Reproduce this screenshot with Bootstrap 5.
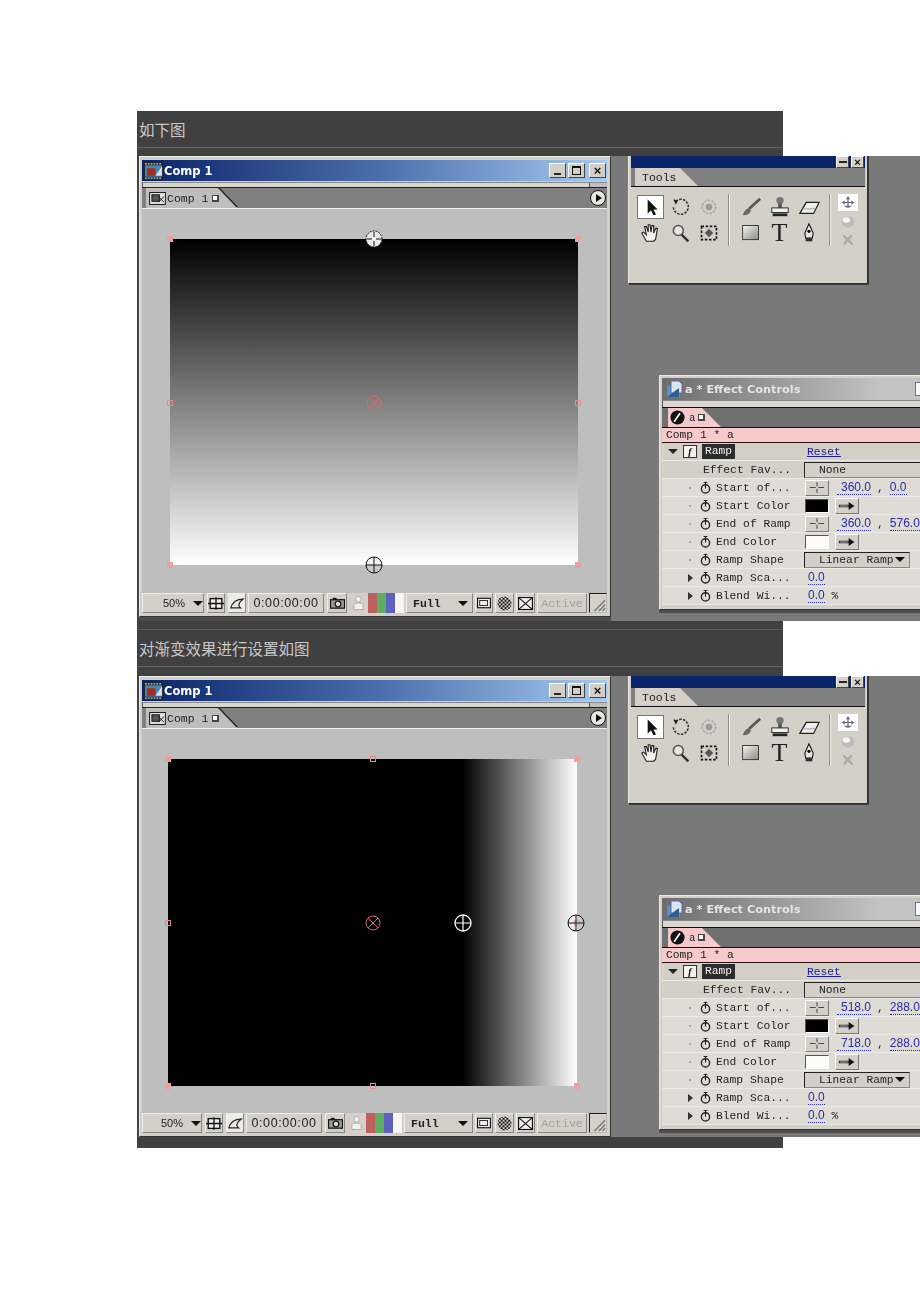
<!DOCTYPE html>
<html lang="zh">
<head>
  <meta charset="UTF-8" />
  <meta name="viewport" content="width=device-width, initial-scale=1.0"/>
  <title>如下图</title>
  <link rel="stylesheet" href="https://cdn.jsdelivr.net/npm/bootstrap@5.3.0/dist/css/bootstrap.min.css" />
  <style>
  body { background: #fff; margin: 0; overflow-x: hidden; }
  #doc { margin-left: 137px; padding-top: 111px; width: 783px; height: 1191px; overflow: hidden; }
  .band { width: 646px; background: #404040; color: #c9c9c9; font: 15.5px "Noto Sans CJK SC", sans-serif; }
  .band-text { height: 37px; padding-left: 2px; line-height: 36px; border-bottom: 1px solid #666; }
  .band-top { height: 8px; border-bottom: 1px solid #5c5c5c; box-sizing: content-box; }
  .band-gap { height: 8px; }
  .band-end { height: 11px; }
  .desk { width: 783px; height: 465px; background: #797979; overflow: hidden; filter: blur(.45px); }
  .win { background: #d4d0c8; border: 1px solid; border-color: #eceae4 #333 #333 #eceae4; box-sizing: border-box; }

  /* comp window */
  .comp { left: 2px; top: 0; width: 472px; height: 461px; padding: 3px 3px 3px 2px; box-shadow: -2px 0 0 #444, 0 4px 0 #4c4c4c, -2px 4px 0 #444; }
  .comp-title { height: 21px; margin-bottom: 1px; padding-left: 2px; background: linear-gradient(90deg, #0a246a, #4a6cab 50%, #a6caf0); color: #fff; font: bold 11.5px "DejaVu Sans", sans-serif; }
  .capbtn { width: 17px; height: 15px; background: #d4d0c8; border: 1px solid; border-color: #fff #444 #444 #fff; margin-right: 2px; display: block; }
  .strip { height: 6px; background: #d9d6cf; border-top: 1px solid #888; border-left: 1px solid #555; border-bottom: 1px solid #222; }
  .strip-end { width: 18px; margin-left: auto; height: 100%; background: #bebebe; border-left: 1px solid #555; }
  .tabrow { height: 21px; background: #808080; border-bottom: 1px solid #f0f0f0; padding-left: 4px; }
  .tab-wrap { filter: drop-shadow(1px -1px 0 #222); }
  .tab-in { height: 20px; background: #bebebe; color: #222; font: 11.5px "Liberation Mono", monospace; clip-path: polygon(0 0, calc(100% - 19px) 0, 100% 100%, 0 100%); }
  .tab-dot { width: 7px; height: 7px; background: #fff; border: 1px solid #444; border-width: 1px 2px 2px 1px; margin-left: 4px; }
  .playbtn { margin-left: auto; margin-right: 1px; }
  .viewer { height: 384px; background: #bebebe; }
  .pic { position: absolute; }
  .hnd { position: absolute; width: 6px; height: 6px; background: #eb9f9f; transform: translate(-50%, -50%); }
  .hnd-o { background: none; border: 1px solid #e68a8a; }
  .ctrl { position: absolute; width: 18px; height: 18px; transform: translate(-50%, -50%); }

  .stat { height: 20px; font: 11.5px "Liberation Mono", monospace; color: #222; }
  .stat-i { height: 20px; flex: none; background: #d4d0c8; border: 1px solid; border-color: #eee #888 #888 #eee; }
  .stat-f { border-color: transparent; background: none; }
  .stat-w { background: #ecebe6; }
  .stat-s { font: 11px "Liberation Sans", sans-serif; }
  .stat-t { font: 12.5px "Liberation Sans", sans-serif; letter-spacing: .6px; }
  .drop-tri { width: 0; height: 0; border: 5px solid transparent; border-top-color: #111; border-bottom-width: 0; }
  .bar-c { width: 9px; height: 100%; }
  .off-t { color: #a5a49c; }
  .grip { border-color: #222 #bbb #bbb #222; background: #d4d0c8; }

  /* tools */
  .tools { left: 491px; top: -1px; width: 240px; height: 129px; padding: 0 2px 0 2px; box-shadow: 1px 1px 0 #3a3a3a; border-top: 0; }
  .tools-title { height: 13px; background: #0a246a; padding-right: 1px; }
  .mini { width: 13px; height: 12px; background: #d4d0c8; border: 1px solid; border-color: #fff #444 #444 #fff; margin-left: 2px; display: block; }
  .tools-tabs { height: 19px; background: #808080; border-bottom: 1px solid #111; padding-left: 4px; }
  .tools-tab { height: 18px; padding: 0 0 0 7px; width: 63px; background: #d4d0c8; color: #222; font: 11.5px "Liberation Mono", monospace; clip-path: polygon(0 0, 45px 0, 100% 100%, 0 100%); }
  .tools-body { padding: 7px 0 0 5px; }
  .tgrid { display: grid; grid-template-columns: repeat(3, 29px); grid-auto-rows: 26px; justify-items: center; align-items: center; }
  .tsep { width: 1px; height: 52px; background: #8e8c85; border-right: 1px solid #f2f0ea; box-sizing: content-box; }
  .tsep-a { margin: 0 6px 0 5px; }
  .tsep-b { margin: 0 7px 0 6px; }
  .tile { width: 27px; height: 24px; background: #fff; border: 1px solid #777; }
  .tile-f { width: 20px; height: 17px; background: #fff; }
  .tside { width: 20px; }

  /* effect controls */
  .fx { left: 522px; top: 219px; width: 300px; height: 235px; padding: 2px 2px 0 2px; box-shadow: 0 3px 0 #4e4e4e; }
  .fx-title { height: 22px; background: linear-gradient(90deg, #6d6d6d, #c4c4c4 75%); color: #e4e4e4; font: bold 11.3px "DejaVu Sans", sans-serif; padding-left: 4px; }
  .fx-strip { height: 7px; border-bottom: 0; }
  .fx-tabs { height: 21px; background: #707070; border-bottom: 1px solid #111; padding-left: 6px; border-top: 1px solid #111; }
  .fx-tab { width: 53px; height: 19px; background: #f3c9c9; color: #222; font: 10.5px "Liberation Mono", monospace; clip-path: polygon(0 0, 34px 0, 100% 100%, 0 100%); padding-left: 2px; }
  .fx-sub { height: 15px; background: #f6caca; border-bottom: 1px solid #2a1010; color: #222; font: 11.3px/14px "Liberation Mono", monospace; padding-left: 4px; }
  .fx-row { height: 18px; color: #222; font: 11.3px "Liberation Mono", monospace; border-bottom: 1px solid #eceae4; white-space: nowrap; }
  .fx-alt { background: #dedcd5; }
  .c-a { width: 38px; flex: none; padding-left: 6px; }
  .c-b { width: 16px; flex: none; }
  .c-l { width: 88px; flex: none; }
  .twist { width: 0; height: 0; border: 5px solid transparent; border-top-color: #222; border-bottom-width: 0; }
  .twist-r { margin-left: 20px; border: 4px solid transparent; border-left: 5px solid #333; border-right-width: 0; }
  .dot-r { margin-left: 21px; width: 2px; height: 2px; background: #aaa; display: block; }
  .fxbox { width: 14px; height: 13px; background: #f4f2ec; border: 1px solid #333; margin-left: 5px; font: italic bold 10px/11px "Liberation Serif", serif; text-align: center; color: #111; }
  .ramp { background: #2c2c2c; color: #eee; padding: 0 3px; height: 15px; line-height: 14px; margin-left: 2px; }
  .lnk { color: #1f1f96; text-decoration: underline; }
  .val { color: #2b2ba3; border-bottom: 1px dotted #2b2ba3; line-height: 13px; font: 12px/13px "Liberation Sans", sans-serif; }
  .val-z { margin-left: 4px; }
  .sel { border: 1px solid #222; border-right-color: #888; border-bottom-color: #888; height: 16px; background: #d4d0c8; }
  .sel-a { width: 118px; padding-left: 14px; }
  .sel-b { width: 106px; padding-left: 14px; }
  .sbtn { width: 24px; height: 16px; border: 1px solid; border-color: #fff #777 #777 #fff; background: #d4d0c8; }
  .swatch { width: 24px; height: 14px; border: 1px solid; border-color: #555 #fff #fff #555; margin-left: 1px; }
  .c-sp { margin: 0 6px; }
  </style>
</head>
<body>

  <svg width="0" height="0" class="position-absolute">
    <symbol id="i-film" viewBox="0 0 20 18"><rect width="20" height="18" fill="#222"/><rect x="1" y="3" width="18" height="12" fill="#3f88b8"/><rect x="3" y="6" width="9" height="8" fill="#a03020"/><path d="M12 14 19 4v10z" fill="#dde"/><path d="M1 1.500h18M1 16.500h18" stroke="#fff" stroke-dasharray="2 1"/></symbol>
    <symbol id="i-comp" viewBox="0 0 18 14"><rect x=".5" y=".5" width="17" height="13" fill="#ddd" stroke="#111"/><rect x="3" y="3" width="8" height="7" fill="#555" stroke="#111"/><path d="M10 11 16 5M11 6l5 5" stroke="#111"/></symbol>
    <symbol id="i-play" viewBox="0 0 16 16"><circle cx="8" cy="8" r="7.500" fill="#e8e6e0" stroke="#111"/><path d="M6 4v8l6-4z" fill="#111"/></symbol>
    <symbol id="i-grid" viewBox="0 0 18 14"><rect x="2.500" y="1.500" width="13" height="11" fill="#eee" stroke="#111" stroke-width="1.500"/><path d="M9 0v14M0 7h18" stroke="#111" stroke-width="1.500"/></symbol>
    <symbol id="i-curve" viewBox="0 0 18 14"><path d="M16 2C9 2 4 5 2 12h11C9 9 12 5 16 2z" fill="none" stroke="#222" stroke-width="1.300"/></symbol>
    <symbol id="i-cam" viewBox="0 0 16 12"><rect x=".5" y="2.500" width="15" height="9" fill="#999" stroke="#111" stroke-width="1.300"/><rect x="3" y=".5" width="4" height="2" fill="#111"/><circle cx="8.500" cy="7" r="3" fill="#ddd" stroke="#111" stroke-width="1.300"/></symbol>
    <symbol id="i-man" viewBox="0 0 14 16"><circle cx="7" cy="4" r="3" fill="#f2f1ec" stroke="#aaa"/><path d="M2 15V10q0-2 5-2t5 2v5z" fill="#f2f1ec" stroke="#aaa"/></symbol>
    <symbol id="i-win" viewBox="0 0 16 14"><rect x=".5" y="1.500" width="15" height="11" fill="#eee" stroke="#111" stroke-width="1.300"/><rect x="3" y="4" width="9" height="6" fill="none" stroke="#111"/></symbol>
    <symbol id="i-chk" viewBox="0 0 16 16"><pattern id="chkp" width="4" height="4" patternUnits="userSpaceOnUse"><rect width="2" height="2" fill="#111"/><rect x="2" y="2" width="2" height="2" fill="#111"/></pattern><circle cx="8" cy="8" r="7.500" fill="url(#chkp)"/></symbol>
    <symbol id="i-box" viewBox="0 0 16 14"><rect x=".5" y=".5" width="15" height="13" fill="#eee" stroke="#111" stroke-width="1.300"/><path d="M1 1l14 12M15 1 1 13" stroke="#111" stroke-width="1.200"/></symbol>
    <symbol id="i-grip" viewBox="0 0 18 20"><path d="M5 19 17 7M10 19l7-7M14 19l3-3" stroke="#777" stroke-width="1.500"/></symbol>
    <symbol id="c-x" viewBox="0 0 18 18"><circle cx="9" cy="9" r="7" fill="none" stroke="#e06a6a"/><path d="M4 4l10 10M14 4 4 14" stroke="#e06a6a"/></symbol>
    <symbol id="c-top" viewBox="0 0 18 18"><circle cx="9" cy="9" r="8" fill="#e8e8e8" stroke="#111" stroke-dasharray="2 1"/><path d="M9 2v14M2 9h14" stroke="#111"/><circle cx="9" cy="9" r="2" fill="#fff"/></symbol>
    <symbol id="c-bot" viewBox="0 0 18 18"><circle cx="9" cy="9" r="8" fill="#ddd" fill-opacity=".35" stroke="#111"/><path d="M9 1v16M1 9h16" stroke="#111"/></symbol>
    <symbol id="c-wht" viewBox="0 0 18 18"><circle cx="9" cy="9" r="8" fill="none" stroke="#fff" stroke-width="1.300"/><path d="M9 1v16M1 9h16" stroke="#fff" stroke-width="1.200"/></symbol>
    <symbol id="t-arrow" viewBox="0 0 24 24"><path d="M8 3v17l4-4 3 6 3-1-3-6h5z" fill="#111"/></symbol>
    <symbol id="t-rot" viewBox="0 0 24 24"><path d="M7 5a9 9 0 1 1-3 7" fill="none" stroke="#333" stroke-width="1.800" stroke-dasharray="3 1.500"/><path d="M4 3l6 1-3 5z" fill="#222"/></symbol>
    <symbol id="t-orb" viewBox="0 0 24 24"><circle cx="12" cy="12" r="8" fill="none" stroke="#aaa" stroke-width="2" stroke-dasharray="3 1.500"/><circle cx="12" cy="12" r="4" fill="#999"/></symbol>
    <symbol id="t-brush" viewBox="0 0 24 24"><path d="M22 3 10 14" stroke="#555" stroke-width="3"/><path d="M10 13q-5 1-7 8 7 0 9-5z" fill="#6a6660"/></symbol>
    <symbol id="t-stamp" viewBox="0 0 24 24"><circle cx="12" cy="5" r="4" fill="#777"/><rect x="10" y="8" width="4" height="6" fill="#555"/><rect x="3" y="13" width="18" height="5" fill="#eee" stroke="#222"/><rect x="4" y="19" width="16" height="3" fill="#222"/></symbol>
    <symbol id="t-eraser" viewBox="0 0 24 24"><path d="M2 19 9 7h14l-6 12z" fill="#eee" stroke="#222" stroke-width="1.400"/><path d="M5 14h14" stroke="#999"/></symbol>
    <symbol id="t-hand" viewBox="0 0 24 24"><path d="M7 21 2 12l2-1 3 3-2-9h2l2 6V3h2l1 8 1-7h2l0 8 2-5h2l-2 12-2 2z" fill="#f4f2ec" stroke="#222" stroke-width="1.200"/></symbol>
    <symbol id="t-mag" viewBox="0 0 24 24"><circle cx="10" cy="9" r="6" fill="#e8e6e0" stroke="#555" stroke-width="1.800"/><path d="M14 14l8 8" stroke="#333" stroke-width="3"/></symbol>
    <symbol id="t-sel" viewBox="0 0 24 24"><rect x="3" y="4" width="18" height="16" fill="none" stroke="#111" stroke-width="2" stroke-dasharray="3 2"/><path d="M12 7l-5 5 5 5 5-5z" fill="#555"/></symbol>
    <symbol id="t-rect" viewBox="0 0 24 24"><defs><linearGradient id="rg" x1="0" y1="0" x2="1" y2="1"><stop offset="0" stop-color="#f4f4f0"/><stop offset="1" stop-color="#8a8a86"/></linearGradient></defs><rect x="2" y="3" width="19" height="17" fill="url(#rg)" stroke="#222"/></symbol>
    <symbol id="t-pen" viewBox="0 0 24 24"><path d="M12 1 7 12l1 6h8l1-6z" fill="#e8e6e0" stroke="#111" stroke-width="1.300"/><circle cx="12" cy="10" r="2" fill="#111"/><rect x="8" y="18" width="8" height="4" fill="#333"/></symbol>
    <symbol id="t-anc" viewBox="0 0 20 18"><path d="M10 2v13M4 9h12" stroke="#667" stroke-width="1.500"/><path d="M10 1 7.500 5h5zM2 9l4-2.500v5zM18 9l-4-2.500v5zM5 13q5 5 10 0" fill="#667"/></symbol>
    <symbol id="t-sph" viewBox="0 0 20 18"><ellipse cx="10" cy="9" rx="8" ry="7" fill="#bbb"/><ellipse cx="8" cy="6.500" rx="5" ry="3.500" fill="#f4f4f0"/></symbol>
    <symbol id="t-tw" viewBox="0 0 20 18"><path d="M4 3l12 12M15 3 9 9 5 15" stroke="#aaa" stroke-width="3" fill="none"/></symbol>
    <symbol id="i-watch" viewBox="0 0 12 14"><circle cx="6" cy="8.500" r="4.500" fill="none" stroke="#222" stroke-width="1.500"/><path d="M4 1.500h4M6 2v6" stroke="#222" stroke-width="1.200"/></symbol>
    <symbol id="i-cross" viewBox="0 0 18 12"><path d="M9 0v12M1 6h16" stroke="#333"/><rect x="7.500" y="4.500" width="3" height="3" fill="#d4d0c8"/></symbol>
    <symbol id="i-pick" viewBox="0 0 22 12"><path d="M1 6h12" stroke="#111" stroke-width="3"/><path d="M2 6h10" stroke="#eee"/><path d="M13 1l7 5-7 5z" fill="#111"/></symbol>
    <symbol id="i-fx" viewBox="0 0 18 18"><circle cx="9" cy="9" r="8.500" fill="#111"/><path d="M5 14 12 4" stroke="#fff" stroke-width="2"/></symbol>
    <symbol id="i-fxdoc" viewBox="0 0 18 18"><rect x="1" y="6" width="13" height="11" fill="#5f93c6"/><path d="M5 1h8l3 3v9H5z" fill="#d9e6f2" stroke="#66a"/><path d="M1 17 13 8v9z" fill="#2d5f94"/></symbol>
  </svg>

  <div id="doc"></div>

  <script src="https://cdn.jsdelivr.net/npm/bootstrap@5.3.0/dist/js/bootstrap.bundle.min.js"></script>
  <script>
    function ic(id, w, h, cls) {
      return `<svg width="${w}" height="${h}" class="${cls || ""}"><use href="#${id}"/></svg>`;
    }

    function statusBar(s) {
      return `<div class="stat d-flex">
        <div class="stat-i stat-s d-flex align-items-center" style="width:${s.dd1}px;padding-left:${s.dd1 - 42}px">50%<span class="drop-tri ms-2"></span></div>
        <div class="stat-i d-flex align-items-center justify-content-center" style="width:18px;margin-left:3px">${ic("i-grid", 16, 13)}</div>
        <div class="stat-i stat-w d-flex align-items-center justify-content-center" style="width:18px;margin-left:3px">${ic("i-curve", 16, 13)}</div>
        <div class="stat-i stat-t d-flex align-items-center justify-content-center" style="width:76px;margin-left:2px">0:00:00:00</div>
        <div class="stat-i d-flex align-items-center justify-content-center" style="width:20px;margin-left:3px">${ic("i-cam", 15, 12)}</div>
        <div class="stat-i stat-f d-flex align-items-center justify-content-center" style="width:18px;margin-left:2px">${ic("i-man", 13, 16)}</div>
        <div class="stat-i d-flex border-0" style="width:36px;margin-left:1px;background:#f6f6f4">
          <span class="bar-c" style="background:#bf5f60"></span><span class="bar-c" style="background:#5fae5f"></span><span class="bar-c" style="background:#5c62bd"></span>
        </div>
        <div class="stat-i d-flex align-items-center" style="width:${s.dd2}px;margin-left:2px;padding-left:6px;font-weight:bold">Full<span class="drop-tri ms-auto me-1"></span></div>
        <div class="stat-i d-flex align-items-center justify-content-center" style="width:18px;margin-left:2px">${ic("i-win", 14, 12)}</div>
        <div class="stat-i d-flex align-items-center justify-content-center" style="width:19px;margin-left:2px">${ic("i-chk", 15, 15)}</div>
        <div class="stat-i d-flex align-items-center justify-content-center" style="width:19px;margin-left:2px">${ic("i-box", 15, 13)}</div>
        <div class="stat-i off-t d-flex align-items-center justify-content-center" style="width:50px;margin-left:2px">Active</div>
        <div class="stat-i grip" style="width:18px;margin-left:2px">${ic("i-grip", 16, 18, "d-block")}</div>
      </div>`;
    }

    function compWin(s) {
      const pts = s.handles.map(h => `<span class="hnd ${h[2] ? "hnd-o" : ""}" style="left:${h[0]}px;top:${h[1]}px"></span>`).join("");
      const ctl = s.ctrls.map(c => `<svg class="ctrl" style="left:${c[1]}px;top:${c[2]}px" viewBox="0 0 18 18"><use href="#${c[0]}"/></svg>`).join("");
      return `<div class="win comp position-absolute d-flex flex-column">
        <div class="comp-title d-flex align-items-center flex-none">
          ${ic("i-film", 19, 18)}<span style="margin-left:1px">Comp 1</span>
          <span class="ms-auto d-flex align-items-center">
            <span class="capbtn position-relative"><span class="position-absolute bg-dark" style="left:4px;bottom:2px;width:7px;height:2px"></span></span>
            <span class="capbtn position-relative"><span class="position-absolute" style="left:3px;top:2px;width:9px;height:9px;border:1px solid #111;border-top-width:2px"></span></span>
            <span class="capbtn d-flex align-items-center justify-content-center" style="font:bold 13px/1 'Liberation Sans',sans-serif;color:#111;margin-left:2px;margin-right:1px">×</span>
          </span>
        </div>
        <div class="strip d-flex"><span class="strip-end"></span></div>
        <div class="tabrow d-flex align-items-center">
          <div class="tab-wrap"><div class="tab-in d-flex align-items-center" style="width:91px;padding-left:3px">${ic("i-comp", 17, 13)}<span style="margin-left:1px">Comp 1</span><span class="tab-dot"></span></div></div>
          ${ic("i-play", 16, 16, "playbtn")}
        </div>
        <div class="viewer position-relative">
          <div class="pic" style="left:${s.pic[0]}px;top:${s.pic[1]}px;width:${s.pic[2]}px;height:${s.pic[3]}px;background:${s.fill}"></div>
          ${pts}${ctl}
        </div>
        ${statusBar(s)}
      </div>`;
    }

    function toolsWin() {
      return `<div class="win tools position-absolute">
        <div class="tools-title d-flex justify-content-end align-items-start" style="padding-top:1px">
          <span class="mini position-relative"><span class="position-absolute bg-dark" style="left:2px;top:4px;width:8px;height:2px"></span></span>
          <span class="mini d-flex align-items-center justify-content-center" style="font:bold 11px/1 'Liberation Sans',sans-serif;color:#111">×</span>
        </div>
        <div class="tools-tabs"><div class="tools-tab d-flex align-items-center">Tools</div></div>
        <div class="tools-body d-flex">
          <div class="tgrid">
            <div class="tile d-flex align-items-center justify-content-center">${ic("t-arrow", 20, 20)}</div>${ic("t-rot", 20, 20)}${ic("t-orb", 20, 20)}
            ${ic("t-hand", 22, 22)}${ic("t-mag", 20, 20)}${ic("t-sel", 20, 20)}
          </div>
          <div class="tsep tsep-a"></div>
          <div class="tgrid">
            ${ic("t-brush", 22, 22)}${ic("t-stamp", 22, 22)}${ic("t-eraser", 22, 22)}
            ${ic("t-rect", 20, 20)}<span style="font:26px/1 'Liberation Serif',serif;color:#222">T</span>${ic("t-pen", 20, 22)}
          </div>
          <div class="tsep tsep-b"></div>
          <div class="tside d-flex flex-column align-items-center">
            <div class="tile-f d-flex align-items-center justify-content-center">${ic("t-anc", 16, 15)}</div>
            ${ic("t-sph", 16, 14, "mt-1")}${ic("t-tw", 16, 14, "mt-1")}
          </div>
        </div>
      </div>`;
    }

    function fxRow(label, value, kind, alt) {
      const lead = kind === "dot" ? `<span class="dot-r"></span>` : `<span class="twist-r"></span>`;
      return `<div class="fx-row d-flex align-items-center ${alt ? "fx-alt" : ""}">
        <div class="c-a d-flex align-items-center">${lead}</div>
        <div class="c-b d-flex align-items-center">${ic("i-watch", 11, 13)}</div>
        <div class="c-l">${label}</div>
        <div class="d-flex align-items-center">${value}</div>
      </div>`;
    }

    function coord(a, b) {
      return `<span class="sbtn d-flex align-items-center justify-content-center" style="margin-left:1px">${ic("i-cross", 16, 11)}</span>
        <span class="val ms-2 ps-1">${a}</span><span class="c-sp">,</span><span class="val">${b}</span>`;
    }

    function colorPick(c) {
      return `<span class="swatch" style="background:${c}"></span><span class="sbtn d-flex align-items-center justify-content-center" style="margin-left:6px">${ic("i-pick", 18, 10)}</span>`;
    }

    function fxWin(s) {
      return `<div class="win fx position-absolute">
        <div class="fx-title d-flex align-items-center">${ic("i-fxdoc", 18, 18)}<span style="margin-left:1px">a * Effect Controls</span>
          <span class="position-absolute bg-light border border-secondary" style="left:255px;top:6px;width:14px;height:14px"></span></div>
        <div class="strip fx-strip"></div>
        <div class="fx-tabs">
          <div class="fx-tab d-flex align-items-center">${ic("i-fx", 15, 15)}<span class="ms-1">a</span><span class="tab-dot" style="margin-left:3px"></span></div>
        </div>
        <div class="fx-sub">Comp 1 * a</div>
        <div class="fx-row d-flex align-items-center">
          <div class="c-a d-flex align-items-center"><span class="twist"></span><span class="fxbox">f</span></div>
          <div class="d-flex" style="width:107px"><span class="ramp">Ramp</span></div>
          <span class="lnk">Reset</span>
        </div>
        <div class="fx-row d-flex align-items-center">
          <div style="width:37px"></div><div style="width:105px;padding-left:4px">Effect Fav...</div>
          <span class="sel sel-a d-flex align-items-center">None</span>
        </div>
        ${fxRow("Start of...", coord(s.start[0], s.start[1]), "dot", 1)}
        ${fxRow("Start Color", colorPick("#000"), "dot", 1)}
        ${fxRow("End of Ramp", coord(s.end[0], s.end[1]), "dot", 1)}
        ${fxRow("End Color", colorPick("#fbfbf8"), "dot", 1)}
        ${fxRow("Ramp Shape", `<span class="sel sel-b d-flex align-items-center">Linear Ramp<span class="drop-tri ms-auto me-1"></span></span>`, "dot", 1)}
        ${fxRow("Ramp Sca...", `<span class="val val-z">0.0</span>`, "arrow", 1)}
        ${fxRow("Blend Wi...", `<span class="val val-z">0.0</span>&nbsp;%`, "arrow", 1)}
      </div>`;
    }

    function shot(s) {
      return `<div class="desk position-relative" style="height:${s.h}px">${toolsWin()}${fxWin(s)}${compWin(s)}</div>`;
    }

    const shots = [
      {
        h: 465, dd1: 62, dd2: 67, pic: [28, 30, 408, 326],
        fill: "linear-gradient(180deg, #000, #fff)",
        handles: [[28, 30], [436, 30], [28, 356], [436, 356], [28, 194, 1], [436, 194, 1]],
        ctrls: [["c-x", 232, 194], ["c-top", 232, 30], ["c-bot", 232, 356]],
        start: ["360.0", "0.0"], end: ["360.0", "576.0"]
      },
      {
        h: 461, dd1: 60, dd2: 69, pic: [26, 30, 409, 327],
        fill: "linear-gradient(90deg, #000 72%, #fff 100%)",
        handles: [[26, 30], [435, 30], [26, 357], [435, 357], [26, 194, 1], [435, 194, 1], [231, 30, 1], [231, 357, 1]],
        ctrls: [["c-x", 231, 194], ["c-wht", 321, 194], ["c-bot", 434, 194]],
        start: ["518.0", "288.0"], end: ["718.0", "288.0"]
      }
    ];

    document.getElementById("doc").innerHTML = `
      <div class="band"><div class="band-text">如下图</div><div class="band-gap"></div></div>
      ${shot(shots[0])}
      <div class="band"><div class="band-top"></div><div class="band-text">对渐变效果进行设置如图</div><div class="band-gap" style="height:9px"></div></div>
      ${shot(shots[1])}
      <div class="band band-end"></div>`;
  </script>
</body>
</html>
